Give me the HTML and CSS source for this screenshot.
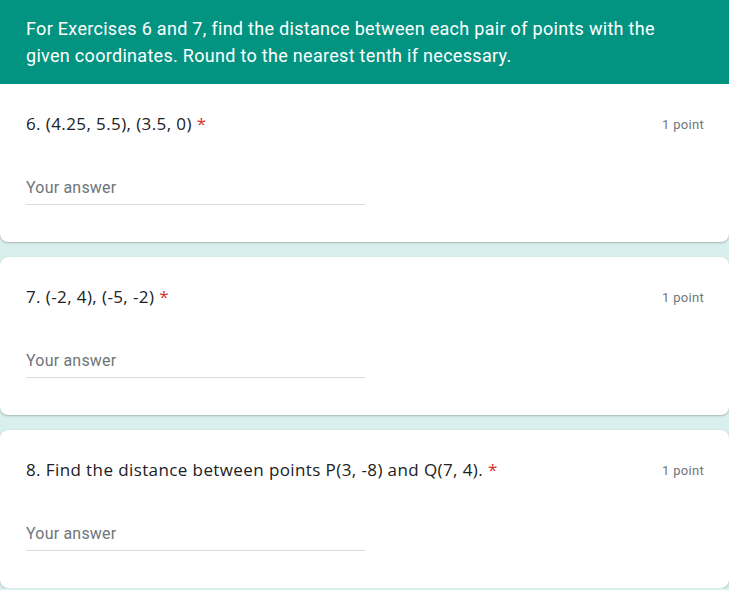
FILE: index.html
```html
<!DOCTYPE html>
<html>
<head>
<meta charset="utf-8">
<link rel="stylesheet" href="styles.css">
</head>
<body>
<div class="form">
  <div class="section-header">
    <div class="section-title">For Exercises 6 and 7, find the distance between each pair of points with the given coordinates. Round to the nearest tenth if necessary.</div>
  </div>
  <div class="card first">
    <div class="q-row">
      <div class="q-title">6. (4.25, 5.5), (3.5, 0) <span class="req">*</span></div>
      <div class="points">1 point</div>
    </div>
    <div class="answer">Your answer</div>
  </div>
  <div class="card">
    <div class="q-row">
      <div class="q-title">7. (-2, 4), (-5, -2) <span class="req">*</span></div>
      <div class="points">1 point</div>
    </div>
    <div class="answer">Your answer</div>
  </div>
  <div class="card">
    <div class="q-row">
      <div class="q-title">8. Find the distance between points P(3, -8) and Q(7, 4). <span class="req">*</span></div>
      <div class="points">1 point</div>
    </div>
    <div class="answer">Your answer</div>
  </div>
</div>
</body>
</html>
```
FILE: styles.css
```css
html, body {
  margin: 0;
  padding: 0;
  background: #d9efed;
  overflow: hidden;
}
.form {
  display: flex;
  flex-direction: column;
  gap: 15px;
  width: 729px;
}
.section-header {
  background: #039481;
  height: 84px;
  box-sizing: border-box;
  padding: 15px 26px 0 26px;
  margin-bottom: -15px;
}
.section-title {
  font-family: Roboto, "Liberation Sans", sans-serif;
  font-size: 18px;
  line-height: 27px;
  letter-spacing: 0.3px;
  color: #ffffff;
}
.card {
  background: #ffffff;
  border-radius: 8px;
  height: 158px;
  box-sizing: border-box;
  padding: 28px 25px 0 26px;
  box-shadow: 0 1px 2px rgba(60, 64, 67, 0.3), 0 0 1px rgba(60, 64, 67, 0.15);
}
.card.first {
  border-radius: 0 0 8px 8px;
}
.q-row {
  display: flex;
  justify-content: space-between;
  align-items: center;
  height: 24px;
}
.q-title {
  font-family: "Open Sans", Roboto, sans-serif;
  font-size: 17px;
  line-height: 24px;
  color: #202124;
  letter-spacing: 0.4px;
}
.req {
  color: #d93025;
}
.points {
  font-family: Roboto, "Liberation Sans", sans-serif;
  font-size: 13px;
  letter-spacing: 0.3px;
  color: #70757a;
}
.answer {
  margin-top: 42px;
  width: 339px;
  font-family: Roboto, "Liberation Sans", sans-serif;
  font-size: 16px;
  letter-spacing: 0.2px;
  color: #70757a;
  padding-bottom: 6px;
  border-bottom: 1px solid #dadce0;
  line-height: 20px;
}
```
